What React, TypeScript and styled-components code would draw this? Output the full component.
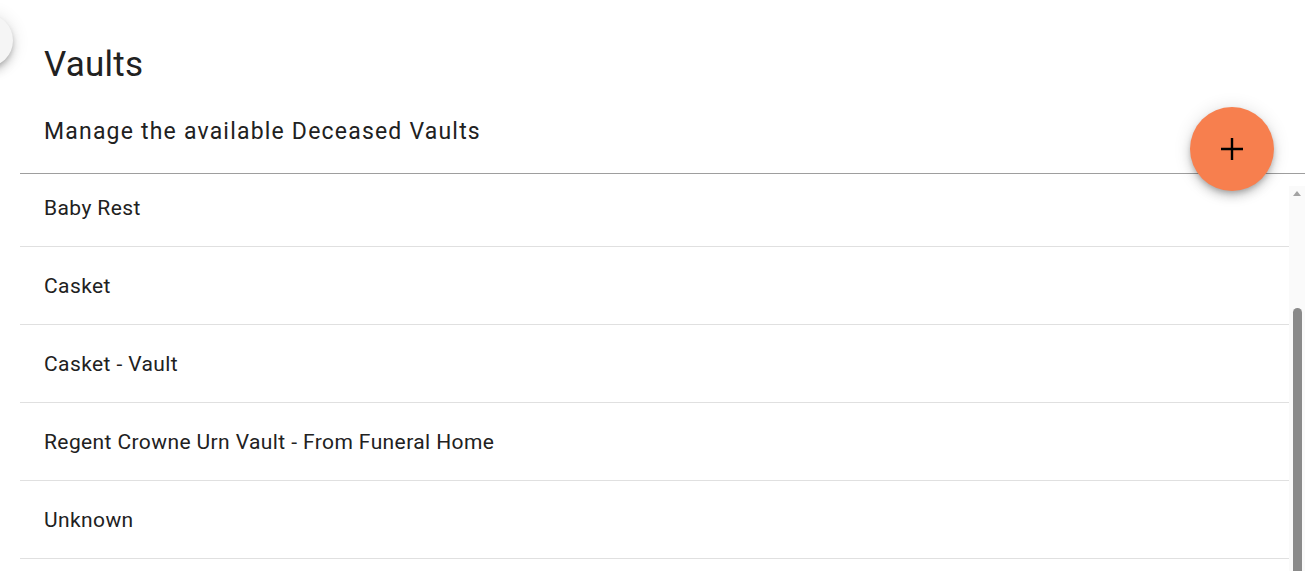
import styled, { createGlobalStyle } from "styled-components";

const GlobalStyle = createGlobalStyle`
  html, body {
    margin: 0;
    padding: 0;
    background: #ffffff;
    overflow: hidden;
    font-family: Roboto, "Liberation Sans", sans-serif;
    color: #212121;
  }
`;

const Page = styled.div`
  position: relative;
  width: 1305px;
  height: 571px;
  overflow: hidden;
`;

const DrawerToggle = styled.button`
  position: absolute;
  left: -40px;
  top: 14px;
  width: 53px;
  height: 53px;
  border-radius: 50%;
  border: none;
  background: #f5f5f5;
  box-shadow: 0 3px 5px -1px rgba(0, 0, 0, 0.2), 0 6px 10px 0 rgba(0, 0, 0, 0.14),
    0 1px 18px 0 rgba(0, 0, 0, 0.12);
`;

const Main = styled.main`
  display: flex;
  flex-direction: column;
  margin-left: 20px;
`;

const Header = styled.header`
  display: flex;
  flex-direction: column;
  padding: 43px 24px 0;
  height: 174px;
  box-sizing: border-box;
  border-bottom: 1px solid #9e9e9e;
`;

const Title = styled.h1`
  margin: 0;
  font-size: 35px;
  font-weight: 400;
  line-height: 44px;
  letter-spacing: 0.25px;
`;

const Subtitle = styled.h2`
  margin: 31px 0 0;
  font-size: 23px;
  font-weight: 400;
  line-height: 28px;
  letter-spacing: 1.2px;
`;

const Body = styled.div`
  display: flex;
  height: 420px;
`;

const Viewport = styled.div`
  flex: 1;
  overflow: hidden;
`;

const List = styled.ul`
  list-style: none;
  margin: -5px 0 0;
  padding: 0;
`;

const Row = styled.li`
  display: flex;
  align-items: center;
  height: 78px;
  box-sizing: border-box;
  padding: 0 24px;
  border-bottom: 1px solid #e0e0e0;
  font-size: 21px;
  letter-spacing: 0.4px;
`;

const Scrollbar = styled.div`
  display: flex;
  flex-direction: column;
  align-items: center;
  width: 16px;
  margin-top: 12px;
  background: #fafafa;
`;

const ArrowUp = styled.div`
  margin-top: 5px;
  width: 0;
  height: 0;
  border-left: 4px solid transparent;
  border-right: 4px solid transparent;
  border-bottom: 5px solid #a3a3a3;
`;

const Thumb = styled.div`
  margin-top: 112px;
  width: 9px;
  flex: 1;
  border-radius: 5px 5px 0 0;
  background: #8a8a8a;
`;

const Fab = styled.button`
  position: absolute;
  left: 1190px;
  top: 107px;
  width: 84px;
  height: 84px;
  border-radius: 50%;
  border: none;
  background: #f77f4e;
  display: flex;
  align-items: center;
  justify-content: center;
  box-shadow: 0 3px 5px -1px rgba(0, 0, 0, 0.2), 0 6px 10px 0 rgba(0, 0, 0, 0.14),
    0 1px 18px 0 rgba(0, 0, 0, 0.12);
  cursor: pointer;
`;

const vaults = [
  "Baby Rest",
  "Casket",
  "Casket - Vault",
  "Regent Crowne Urn Vault - From Funeral Home",
  "Unknown",
];

export default function App() {
  return (
    <>
      <GlobalStyle />
      <Page>
        <DrawerToggle aria-label="Open menu" />
        <Main>
          <Header>
            <Title>Vaults</Title>
            <Subtitle>Manage the available Deceased Vaults</Subtitle>
          </Header>
          <Body>
            <Viewport>
              <List>
                {vaults.map((v) => (
                  <Row key={v}>{v}</Row>
                ))}
              </List>
            </Viewport>
            <Scrollbar>
              <ArrowUp />
              <Thumb />
            </Scrollbar>
          </Body>
        </Main>
        <Fab aria-label="Add vault">
          <svg width="24" height="24" viewBox="0 0 24 24">
            <path d="M12 1v22M1 12h22" stroke="#000" strokeWidth="2.4" fill="none" />
          </svg>
        </Fab>
      </Page>
    </>
  );
}
